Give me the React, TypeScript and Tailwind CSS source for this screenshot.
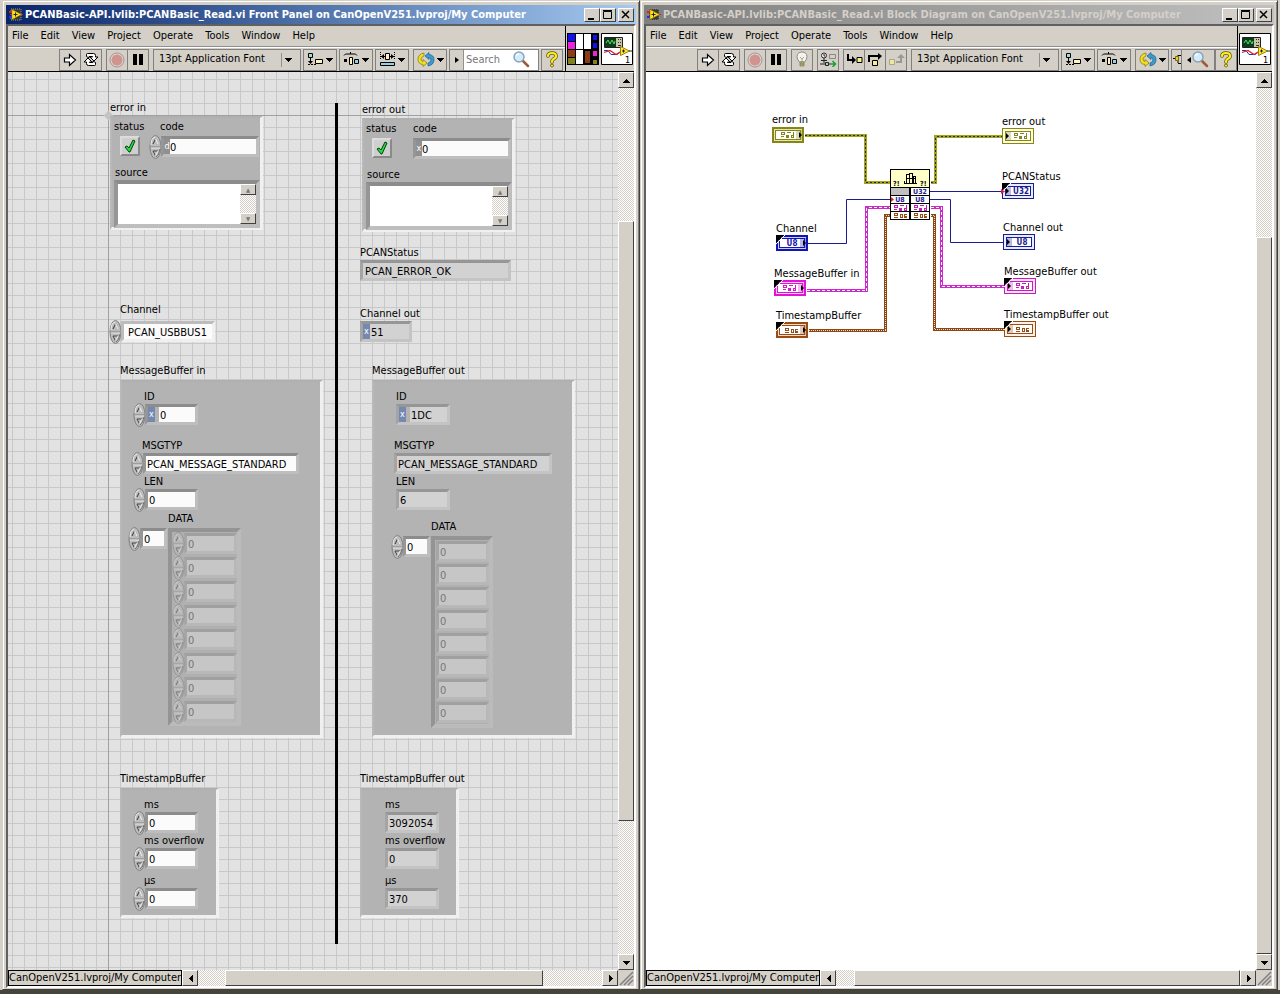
import React, { useId } from 'react';
import clsx from 'clsx';

const raised = 'bg-[#d4d0c8] border border-t-white border-l-white border-b-[#404040] border-r-[#404040]';
const dither = 'bg-[repeating-conic-gradient(#ffffff_0_25%,#d4d0c8_0_50%)] bg-[size:2px_2px]';
const tool = 'h-[22px] shrink-0 flex items-center justify-center border border-[#808080] bg-[#d4d0c8]';

/* ---------- icons ---------- */

const Arrow = ({ dir }: { dir: 'up' | 'down' | 'left' | 'right' }) => {
  const d = { up: 'M0 6h7L3.5 2z', down: 'M0 2h7L3.5 6z', left: 'M6 0v7L2 3.5z', right: 'M2 0v7l4-3.5z' }[dir];
  return (
    <svg width="7" height="7" viewBox="0 0 7 7" shapeRendering="crispEdges">
      <path d={d} />
    </svg>
  );
};

const LabviewIcon = () => (
  <svg width="14" height="13" viewBox="0 0 14 13" className="shrink-0">
    <rect x="2" y="1" width="10" height="11" fill="#3a3a30" stroke="#999" strokeDasharray="1 1" />
    <path d="M0 4h3" stroke="#e02020" strokeWidth="2" />
    <path d="M0 9h3" stroke="#2030e0" strokeWidth="2" />
    <path d="M3 1.500l9.500 5L3 11.500z" fill="#ffe21a" stroke="#8a7400" strokeWidth=".5" />
    <path d="M4.500 6.500h4M6.500 4.500v4" stroke="#222" />
    <path d="M12 6.500h2" stroke="#e02020" />
  </svg>
);

const RunIcon = () => (
  <svg width="14" height="14" viewBox="0 0 14 14">
    <path d="M1.500 5h5V1.500l6 5.500-6 5.500V9h-5z" fill="#fff" stroke="#000" strokeWidth="1.200" />
  </svg>
);

const LoopIcon = () => (
  <svg width="16" height="15" viewBox="0 0 16 15" fill="#fff" stroke="#000" strokeLinejoin="round">
    <path d="M3.500 4.500V2.500Q3.500 1.500 4.500 1.500h6Q12.500 1.500 12.500 3.500V5h2.500l-4 4-4-4h2.500V4.500H6V6z" />
    <path d="M12.500 10.500v2q0 1-1 1h-6Q3.500 13.500 3.500 11.500V10H1l4-4 4 4H6.500v.500H10V9z" />
  </svg>
);

const StopIcon = () => (
  <svg width="16" height="16" viewBox="0 0 16 16">
    <circle cx="8" cy="8" r="7" fill="#e4d4d0" stroke="#a09490" />
    <circle cx="8" cy="8" r="5.500" fill="#d09490" />
  </svg>
);

const PauseIcon = () => (
  <svg width="10" height="11" viewBox="0 0 10 11">
    <path d="M0 0h4v11H0zM6 0h4v11H6z" />
  </svg>
);

const BulbIcon = () => (
  <svg width="14" height="17" viewBox="0 0 14 17">
    <path d="M4.500 11Q2 8.500 2 5.500 2.500 1 7 1t5 4.500Q12 8.500 9.500 11z" fill="#f4f2ea" stroke="#8c8c84" />
    <path d="M5 6l2 2 2-2M7 8v3" fill="none" stroke="#a8a498" />
    <path d="M5 11h4v4H5z" fill="#c8c040" stroke="#777" strokeWidth=".8" />
    <path d="M5 13h4" stroke="#777" />
  </svg>
);

const RetainIcon = () => (
  <svg width="18" height="15" viewBox="0 0 18 15" fill="none" stroke="#222">
    <circle cx="5" cy="3.500" r="2.500" fill="#fff" />
    <path d="M5 2v2h1.500M5 6v5M2 8.500h6M1 12h5M9 12h3" />
    <path d="M10.500 2.500h6v4h-6z" stroke="#888" />
    <path d="M6.500 10.500h3v3h-3z" fill="#9fd4e8" />
    <path d="M12 12h4M13.500 9l3 3-3 3" stroke="#18a028" strokeWidth="1.500" />
  </svg>
);

const StepIntoIcon = () => (
  <svg width="17" height="13" viewBox="0 0 17 13" fill="none">
    <path d="M2 1v6h5" stroke="#000" strokeWidth="2" />
    <path d="M6 3l4 4-4 4z" fill="#000" />
    <path d="M11 4.500h5v5h-5z" fill="#f4f090" stroke="#000" />
  </svg>
);

const StepOverIcon = () => (
  <svg width="16" height="14" viewBox="0 0 16 14" fill="none">
    <path d="M2 9V3h10" stroke="#000" strokeWidth="2" />
    <path d="M11 0l4 3-4 4z" fill="#000" />
    <path d="M5.500 7.500h5v5h-5z" fill="#f4f090" stroke="#000" />
  </svg>
);

const StepOutIcon = () => (
  <svg width="17" height="13" viewBox="0 0 17 13" fill="none">
    <path d="M1.500 6.500h5v5h-5z" fill="#ece8a0" stroke="#aaa68c" />
    <path d="M8 9h5V4" stroke="#999" strokeWidth="2" />
    <path d="M9 5l4-4 4 4z" fill="#999" />
  </svg>
);

const AlignIcon = () => (
  <svg width="17" height="15" viewBox="0 0 17 15" fill="none" stroke="#000">
    <path d="M1.500 1.500h4v4h-4z" fill="#a0dcdc" />
    <path d="M3.500 6v4" />
    <path d="M1 12.500h8" strokeDasharray="2 1" />
    <path d="M1 9h5l-2.500 3z" fill="#000" stroke="none" />
    <path d="M8.500 7.500h7v4h-7z" fill="#fff4c0" />
  </svg>
);

const DistributeIcon = () => (
  <svg width="17" height="15" viewBox="0 0 17 15" fill="none" stroke="#000">
    <path d="M1 3.500L2.500 2h10L14 3.500M7.500 2V0" />
    <path d="M1 7h3v3H1z" fill="#000" stroke="none" />
    <path d="M6.500 5.500h3v7h-3z" fill="#fff4c0" />
    <path d="M11.500 7.500h4v4h-4z" fill="#8cd4ec" />
  </svg>
);

const ResizeIcon = () => (
  <svg width="17" height="15" viewBox="0 0 17 15" fill="none" stroke="#000">
    <path d="M1.500 0v8M15.500 0v8" strokeDasharray="1 1" />
    <path d="M2 4.500h4M11 4.500h4" />
    <path d="M2 4.500l3-2.500v5zM15 4.500L12 2v5z" fill="#000" stroke="none" />
    <path d="M6.500 1.500h4v6h-4z" fill="#fff4c0" />
    <path d="M1.500 10.500h14v3h-14z" fill="#8cd4ec" />
  </svg>
);

const ReorderIcon = () => (
  <svg width="18" height="15" viewBox="0 0 18 15" strokeWidth=".7">
    <path d="M7 1Q1 2 1 7.500 1 12 6 12.500V14.500L10 11 6 7.500v2Q4 9 4 7t3-3z" fill="#f0e020" stroke="#80720c" />
    <path d="M11 14q6-1 6-6.500Q17 3 12 2.500V.500L8 4l4 3.500v-2q2 .500 2 2.500t-3 3z" fill="#3c9cd0" stroke="#1c5c88" />
  </svg>
);

const SearchIcon = () => (
  <svg width="18" height="17" viewBox="0 0 18 17">
    <path d="M11 10l5 5" stroke="#9c5c38" strokeWidth="2.500" strokeLinecap="round" />
    <circle cx="7" cy="6" r="5" fill="#d4ecfa" stroke="#88a4bc" strokeWidth="1.500" />
    <path d="M4 5q1-2 3-2" fill="none" stroke="#fff" strokeWidth="1.300" />
  </svg>
);

const HelpIcon = () => (
  <svg width="14" height="17" viewBox="0 0 14 17" fill="none" strokeLinecap="round">
    <path d="M3 5q0-3 4-3t4 3q0 2-2.500 3Q7 9 7 11M7 14.500v.100" stroke="#5c5400" strokeWidth="3.600" />
    <path d="M3 5q0-3 4-3t4 3q0 2-2.500 3Q7 9 7 11M7 14.500v.100" stroke="#ffec20" strokeWidth="2.200" />
  </svg>
);

const ConnectorPane = () => (
  <svg width="32" height="32" viewBox="0 0 32 32" shapeRendering="crispEdges">
    <path fill="#000" d="M0 0h32v32H0z" />
    <path fill="#fff" d="M9 1h7v15H9zM17 1h7v15h-7zM9 17h7v14H9z" />
    <path fill="#1010f0" d="M1 1h7v7H1z" />
    <path fill="#f020e0" d="M1 9h7v7H1z" />
    <path fill="#8c3c10" d="M1 17h7v7H1zM18 18h5v12h-5z" />
    <path fill="#80801c" d="M1 25h7v6H1zM26 27h4v4h-4z" />
    <path fill="#1010f0" d="M26 2h4v5h-4zM26 10h4v5h-4z" />
    <path fill="#f020e0" d="M26 18h4v5h-4z" />
  </svg>
);

const ViIcon = () => (
  <svg width="32" height="32" viewBox="0 0 32 32">
    <path d="M.5.500h31v31H.5z" fill="#fff" stroke="#000" />
    <path d="M3.500 4.500h18v10h-18z" fill="#c8c4a8" stroke="#222" />
    <path d="M4 5h11v9H4z" fill="#0c3c1c" />
    <path d="M5 10l2-3 2 4 2-4 2 4 1-3" fill="none" stroke="#50e060" />
    <path d="M17 6.500h1M19 6.500h1M17 9.500h1M19 9.500h1M17 12.500h3" stroke="#333" />
    <path d="M3 17.500h4l3 4h6l4-3" fill="none" stroke="#2030c0" />
    <path d="M3 19.500l6-2 6 4 5-3" fill="none" stroke="#e02020" strokeWidth="1.300" />
    <path d="M19.500 13.500l9 4.500-9 4.500z" fill="#ffe83c" stroke="#a08000" />
    <path d="M21 18h3M22.500 16.500v3M28 18h3" stroke="#222" />
    <text x="24" y="30" fontSize="9">1</text>
  </svg>
);

/* ---------- window chrome ---------- */

const ToolButton = ({ label, className, children }: { label: string; className?: string; children: React.ReactNode }) => (
  <button aria-label={label} className={clsx(tool, className ?? 'w-[22px]')}>{children}</button>
);

const MenuButton = ({ label, className, children }: { label: string; className?: string; children: React.ReactNode }) => (
  <button aria-label={label} className={clsx(tool, 'w-[34px] gap-0.5', className)}>
    {children}
    <Arrow dir="down" />
  </button>
);

const FontSelect = () => (
  <div className={clsx(tool, 'relative w-[148px] ml-1 mr-[2px]')}>
    <select aria-label="Text settings" className="appearance-none w-full h-full pl-[5px] pr-5 pb-[2px] bg-transparent outline-none">
      <option>13pt Application Font</option>
    </select>
    <span className="absolute right-2 pointer-events-none"><Arrow dir="down" /></span>
    <span className="absolute right-4 h-3.5 w-px mr-[2px] bg-[#909090]" />
  </div>
);

const FrontTools = () => (
  <>
    <FontSelect />
    <MenuButton label="Align Objects"><AlignIcon /></MenuButton>
    <MenuButton label="Distribute Objects" className="ml-[2px]"><DistributeIcon /></MenuButton>
    <MenuButton label="Resize Objects" className="ml-[2px]"><ResizeIcon /></MenuButton>
    <MenuButton label="Reorder" className="ml-1"><ReorderIcon /></MenuButton>
    <div className={clsx(tool, 'w-[90px] ml-[2px]')}>
      <span className="w-[13px] flex justify-center">
        <svg width="4" height="6" viewBox="0 0 4 6"><path d="M0 0v6l4-3z" /></svg>
      </span>
      <label className="flex flex-1 h-full items-center bg-white border-l border-[#909090]">
        <input aria-label="Search" placeholder="Search" className="w-12 pl-[2px] outline-none placeholder:text-[#777777]" />
        <SearchIcon />
      </label>
    </div>
    <ToolButton label="Context Help" className="w-[22px] ml-[2px]"><HelpIcon /></ToolButton>
  </>
);

const DiagramTools = () => (
  <>
    <ToolButton label="Highlight Execution" className="w-[22px] ml-1"><BulbIcon /></ToolButton>
    <ToolButton label="Retain Wire Values" className="w-[22px] ml-1"><RetainIcon /></ToolButton>
    <ToolButton label="Step Into" className="w-[22px] ml-1"><StepIntoIcon /></ToolButton>
    <ToolButton label="Step Over" className="w-[22px] -ml-px"><StepOverIcon /></ToolButton>
    <ToolButton label="Step Out" className="w-[22px] -ml-px"><StepOutIcon /></ToolButton>
    <FontSelect />
    <MenuButton label="Align Objects"><AlignIcon /></MenuButton>
    <MenuButton label="Distribute Objects" className="ml-[2px]"><DistributeIcon /></MenuButton>
    <MenuButton label="Reorder" className="ml-1"><ReorderIcon /></MenuButton>
    <ToolButton label="Clean Up Diagram" className="w-[11px] ml-[2px]">
      <svg width="8" height="12" viewBox="0 0 8 12">
        <path d="M0 4.500h2M5 1v8M5 9.500h3M5 1.500h3" stroke="#000" fill="none" />
        <path d="M2.500 2.500h3v4h-3z" fill="#e8d020" stroke="#806c00" />
      </svg>
    </ToolButton>
    <ToolButton label="Search" className="w-[34px] -ml-px">
      <svg width="4" height="6" viewBox="0 0 4 6"><path d="M4 0v6L0 3z" /></svg>
      <SearchIcon />
    </ToolButton>
    <ToolButton label="Context Help"><HelpIcon /></ToolButton>
  </>
);

const ScrollButton = ({ dir }: { dir: 'up' | 'down' | 'left' | 'right' }) => (
  <button aria-label={`Scroll ${dir}`} className={clsx('size-4 shrink-0 flex items-center justify-center', raised)}>
    <Arrow dir={dir} />
  </button>
);

interface WindowProps {
  title: string;
  active?: boolean;
  tools: React.ReactNode;
  icons: React.ReactNode;
  vScroll: React.ReactNode;
  hScroll: React.ReactNode;
  children: React.ReactNode;
}

const Window = ({ title, active, tools, icons, vScroll, hScroll, children }: WindowProps) => (
  <section className="flex-1 min-w-0 flex flex-col bg-[#d4d0c8] border border-t-[#d4d0c8] border-l-[#d4d0c8] border-r-[#404040] border-b-[#404040] px-[3px] pb-px pt-1 shadow-[inset_1px_1px_0_#ffffff,inset_-1px_0_0_#808080]">
    <header
      className={clsx(
        'h-[19px] shrink-0 flex items-center pr-[2px] bg-linear-to-r font-bold',
        active ? 'from-[#0a246a] to-[#a6caf0] text-white' : 'from-[#808080] to-[#c0c0c0] text-[#d4d0c8]'
      )}
    >
      <span className="pl-[3px] pr-[2px]"><LabviewIcon /></span>
      <h1 className="flex-1 truncate">{title}</h1>
      <button aria-label="Minimize" className={clsx('w-4 h-3.5', raised)}>
        <svg width="14" height="12" viewBox="0 0 14 12"><path d="M3 9h6v2H3z" /></svg>
      </button>
      <button aria-label="Maximize" className={clsx('w-4 h-3.5', raised)}>
        <svg width="14" height="12" viewBox="0 0 14 12"><path d="M2.500 2.500h8v7h-8zM2 1.500h9" fill="none" stroke="#000" /></svg>
      </button>
      <button aria-label="Close" className={clsx('w-4 h-3.5 ml-[2px]', raised)}>
        <svg width="14" height="12" viewBox="0 0 14 12"><path d="M3 2l7 7M10 2L3 9" stroke="#000" strokeWidth="1.500" /></svg>
      </button>
    </header>

    <div className="flex-1 min-h-0 flex flex-col border-2 border-t-[#606060] border-l-[#606060] border-r-white border-b-white">
      <div className="h-[46px] shrink-0 flex border-b border-black">
        <div className="flex-1 min-w-0 flex flex-col overflow-hidden">
          <nav className="h-[21px] flex items-center gap-3 pl-1 border-b border-[#909090]">
            {['File', 'Edit', 'View', 'Project', 'Operate', 'Tools', 'Window', 'Help'].map(item => (
              <button key={item}>{item}</button>
            ))}
          </nav>
          <div className="flex-1 flex items-center pl-[51px] border-t border-white">
            <ToolButton label="Run"><RunIcon /></ToolButton>
            <ToolButton label="Run Continuously" className="w-[22px] -ml-px"><LoopIcon /></ToolButton>
            <ToolButton label="Abort Execution" className="w-[22px] ml-1"><StopIcon /></ToolButton>
            <ToolButton label="Pause" className="w-[22px] -ml-px"><PauseIcon /></ToolButton>
            {tools}
          </div>
        </div>
        <div className="shrink-0 flex items-center gap-[2px] px-px border-l border-black">{icons}</div>
      </div>

      <div className="flex-1 min-h-0 flex">
        {children}
        <div className={clsx('w-4 shrink-0 flex flex-col', dither)}>
          <ScrollButton dir="up" />
          <div className="flex-1 flex flex-col">{vScroll}</div>
          <ScrollButton dir="down" />
        </div>
      </div>

      <footer className="h-4 shrink-0 flex">
        <div className="shrink-0 border border-black leading-[14px] whitespace-nowrap">
          CanOpenV251.lvproj/My Computer
        </div>
        <ScrollButton dir="left" />
        <div className={clsx('flex-1 flex', dither)}>{hScroll}</div>
        <ScrollButton dir="right" />
        <svg width="16" height="16" viewBox="0 0 16 16" className="shrink-0" stroke="#808080" strokeWidth="1.500">
          <path d="M2 15L15 2M6 15l9-9M10 15l5-5" />
        </svg>
      </footer>
    </div>
  </section>
);

/* ---------- front panel controls ---------- */

const Spinner = ({ dim, className }: { dim?: boolean; className?: string }) => (
  <button aria-label="Increment or decrement" className={clsx('w-[13px] shrink-0', dim && 'opacity-50', className)}>
    <svg width="13" height="24" viewBox="0 0 13 24" fill="none">
      <ellipse cx="6.500" cy="12" rx="5.500" ry="11.500" fill="#bcbcbc" stroke="#808080" />
      <path d="M2 10Q2 3 6 2" stroke="#f0f0f0" />
      <path d="M11 14q-1 6-4 8" stroke="#707070" />
      <path d="M2 12h9" stroke="#808080" />
      <path d="M2 13h9" stroke="#e8e8e8" />
      <path d="M4 9l2.500-5" stroke="#333" />
      <path d="M6.500 4L9 9" stroke="#eee" />
      <path d="M4 16h5M4 16l2.500 5" stroke="#444" />
      <path d="M9 16l-2.500 5" stroke="#eee" />
    </svg>
  </button>
);

const Radix = ({ kind }: { kind: 'x' | 'd' | 'hex' }) => (
  <span
    className={clsx(
      'shrink-0 h-full flex items-center justify-center text-[9px] leading-none text-white',
      kind === 'hex' ? 'w-[7px] bg-[#7488b0]' : 'w-1.5 bg-[#909090]'
    )}
  >
    {kind === 'd' ? 'd' : 'x'}
  </span>
);

interface FieldProps {
  label?: string;
  name?: string;
  value: string;
  width: string;
  spin?: boolean;
  readOnly?: boolean;
  white?: boolean;
  dim?: boolean;
  radix?: 'x' | 'd' | 'hex';
  radixGap?: boolean;
  light?: boolean;
  labelClass?: string;
  textClass?: string;
}

const Field = ({ label, name, value, width, spin, readOnly, white, dim, radix, radixGap, light, labelClass, textClass }: FieldProps) => {
  const id = useId();
  return (
    <div className="flex flex-col">
      {label && <label htmlFor={id} className={clsx('whitespace-nowrap pt-px', labelClass)}>{label}</label>}
      <div className="flex items-center h-[21px]">
        {spin && <Spinner dim={dim} className="-mr-px" />}
        <div
          className={clsx(
            'flex h-full border-[3px]',
            width,
            light ? 'border-t-[#bcbcbc] border-l-[#bcbcbc] border-r-[#f0f0f0] border-b-[#f0f0f0]'
              : dim ? 'border-t-[#a0a0a0] border-l-[#a6a6a6] border-r-[#b8b8b8] border-b-[#b8b8b8]'
              : readOnly && !white ? 'border-t-[#969696] border-l-[#a4a4a4] border-r-[#c4c4c4] border-b-[#c4c4c4]'
              : 'border-t-[#8c8c8c] border-l-[#969696] border-r-[#bebebe] border-b-[#bebebe]',
            dim ? 'bg-[#c6c6c6] text-[#777777]' : readOnly && !white ? 'bg-[#d2d2d2]' : 'bg-[#fbfbfb]'
          )}
        >
          {radix && <Radix kind={radix} />}
          {radixGap && <span className="w-1 shrink-0 bg-[#b3b3b3]" />}
          <input
            id={id}
            aria-label={label ? undefined : name}
            defaultValue={value}
            readOnly={readOnly}
            className={clsx('min-w-0 flex-1 h-full pt-px outline-none', textClass ?? 'pl-px')}
          />
        </div>
      </div>
    </div>
  );
};

const cluster = 'bg-[#b3b3b3] border-t-2 border-l-2 border-r-[3px] border-b-[3px] border-t-[#b0b0b0] border-l-[#b8b8b8] border-r-[#f0f0f0] border-b-[#f0f0f0]';

const ErrorCluster = ({ title, out }: { title: string; out?: boolean }) => {
  const id = useId();
  return (
    <fieldset>
      <legend className="mb-px">{title}</legend>
      <div className={clsx('w-[153px] h-[114px] pt-px', cluster)}>
        <div className="flex h-[39px]">
          <label className="pl-[2px] pt-px w-[35px]">
            status
            <input type="checkbox" defaultChecked className="sr-only" />
            <span className="mt-[2px] ml-1.5 size-5 flex items-center justify-center bg-[#cfcfcf] border-2 border-t-[#dcdcdc] border-l-[#dcdcdc] border-r-[#8a8a8a] border-b-[#8a8a8a]">
              <svg width="12" height="14" viewBox="0 0 12 14">
                <path d="M1 8l2-1 2 2 4-8 2 1-5 11H5z" fill="#20e040" stroke="#0a3c10" />
              </svg>
            </span>
          </label>
          <div className={out ? 'pl-[14px]' : 'pl-[2px]'}>
            <Field label="code" value="0" width="w-[98px]" spin={!out} radix={out ? 'x' : 'd'} readOnly={out} white textClass="" labelClass={out ? 'mb-[2px]' : 'pl-[11px] mb-[2px]'} />
          </div>
        </div>
        <div className="pl-[2px] pt-2">
          <label htmlFor={id} className="block pl-px">source</label>
          <div className="flex w-[146px] h-12 border-4 bg-white border-t-[#8c8c8c] border-l-[#969696] border-r-[#bebebe] border-b-[#bebebe]">
            <textarea id={id} readOnly={out} className="flex-1 min-w-0 resize-none outline-none" />
            <div className={clsx('w-4 flex flex-col justify-between', dither)}>
              <button aria-label="Scroll up" className={clsx('h-[11px] flex items-center justify-center text-[6px] leading-none text-[#777777]', raised)}>▲</button>
              <button aria-label="Scroll down" className={clsx('h-[11px] flex items-center justify-center text-[6px] leading-none text-[#777777]', raised)}>▼</button>
            </div>
          </div>
        </div>
      </div>
    </fieldset>
  );
};

const bytes = ['0', '0', '0', '0', '0', '0', '0', '0'];

const MessageCluster = ({ out }: { out?: boolean }) => {
  const pad = out ? '' : 'pl-[11px]';
  return (
    <fieldset>
      <legend className="mb-[2px]">{out ? 'MessageBuffer out' : 'MessageBuffer in'}</legend>
      <div className={clsx('w-[203px] h-[358px] pt-[7px]', cluster)}>
        <div className={out ? 'pl-[22px]' : 'pl-[11px]'}>
          <Field label="ID" value={out ? '1DC' : '0'} width={out ? 'w-[54px]' : 'w-[53px]'} spin={!out} radix="hex" radixGap readOnly={out} labelClass={pad} />
        </div>
        <div className={clsx('mt-[13px]', out ? 'pl-5' : 'pl-[9px]')}>
          <Field label="MSGTYP" value="PCAN_MESSAGE_STANDARD" width={out ? 'w-[158px]' : 'w-[156px]'} spin={!out} readOnly={out} labelClass={pad} />
        </div>
        <div className={out ? 'pl-[22px]' : 'pl-[11px]'}>
          <Field label="LEN" value={out ? '6' : '0'} width={out ? 'w-[54px]' : 'w-[53px]'} spin={!out} readOnly={out} labelClass={pad} />
        </div>
        <div className={out ? 'mt-[10px] pl-[57px]' : 'mt-[2px] pl-[46px]'}>DATA</div>
        <div className={clsx('flex items-start mt-[2px]', out ? 'pl-[17px]' : 'pl-1.5')}>
          <Field name="DATA index" value="0" width="w-[27px]" spin />
          <div
            className={clsx(
              'flex flex-col border-4 bg-[#b0b0b0] pt-px ml-px border-t-[#949494] border-l-[#949494] border-r-[#bbbbbb] border-b-[#bbbbbb]',
              out ? 'w-[62px] gap-[2px] pb-px pl-px' : 'w-[73px] gap-[3px]'
            )}
          >
            {bytes.map((b, i) => (
              <Field key={i} name={`DATA ${i}`} value={b} width="w-[53px]" spin={!out} dim readOnly={out} />
            ))}
          </div>
        </div>
      </div>
    </fieldset>
  );
};

const TimestampCluster = ({ out }: { out?: boolean }) => {
  const pad = out ? '' : 'pl-[11px]';
  const width = out ? 'w-[54px]' : 'w-[53px]';
  return (
    <fieldset>
      <legend className="mb-[2px]">{out ? 'TimestampBuffer out' : 'TimestampBuffer'}</legend>
      <div className={clsx('w-[99px] h-[130px] pt-[7px]', cluster, out ? 'pl-[23px]' : 'pl-[11px]')}>
        <Field label="ms" value={out ? '3092054' : '0'} width={width} spin={!out} readOnly={out} labelClass={pad} />
        <Field label="ms overflow" value="0" width={width} spin={!out} readOnly={out} labelClass={pad} />
        <div className="mt-1">
          <Field label="µs" value={out ? '370' : '0'} width={width} spin={!out} readOnly={out} labelClass={pad} />
        </div>
      </div>
    </fieldset>
  );
};

const FrontPanel = () => (
  <main className="relative flex-1 overflow-hidden leading-[14px] bg-[#e2e2e2] bg-[linear-gradient(to_right,#c8c8c8_1px,transparent_1px),linear-gradient(to_bottom,#c8c8c8_1px,transparent_1px)] bg-[size:12px_12px] bg-[position:4px_7px]">
    <div className="absolute left-[100px] inset-y-0 w-px bg-[#a0a0a0]" />
    <div className="absolute top-[43px] inset-x-0 h-px bg-[#a0a0a0]" />
    <div className="absolute left-[97px] top-10 size-[7px] rotate-45 bg-[#c4c4c4]" />
    <div className="absolute left-[327px] top-[31px] w-[3px] h-[841px] bg-black" />

    <div className="absolute left-[102px] top-[29px]"><ErrorCluster title="error in" /></div>
    <div className="absolute left-[354px] top-[31px]"><ErrorCluster title="error out" out /></div>
    <div className="absolute left-[352px] top-[173px]">
      <Field label="PCANStatus" value="PCAN_ERROR_OK" width="w-[151px]" readOnly textClass="pl-[2px]" />
    </div>
    <div className="absolute left-[352px] top-[234px]">
      <Field label="Channel out" value="51" width="w-[52px]" radix="hex" readOnly />
    </div>
    <div className="absolute left-[101px] top-[230px]">
      <Field label="Channel" value="PCAN_USBBUS1" width="w-[94px]" spin light labelClass="pl-[11px] mb-1" textClass="pl-1" />
    </div>
    <div className="absolute left-[112px] top-[292px]"><MessageCluster /></div>
    <div className="absolute left-[364px] top-[292px]"><MessageCluster out /></div>
    <div className="absolute left-[112px] top-[700px]"><TimestampCluster /></div>
    <div className="absolute left-[352px] top-[700px]"><TimestampCluster out /></div>
  </main>
);

/* ---------- block diagram ---------- */

const labels = [
  { text: 'error in', pos: 'left-[126px] top-[41px]' },
  { text: 'error out', pos: 'left-[356px] top-[43px]' },
  { text: 'PCANStatus', pos: 'left-[356px] top-[98px]' },
  { text: 'Channel', pos: 'left-[130px] top-[150px]' },
  { text: 'Channel out', pos: 'left-[357px] top-[149px]' },
  { text: 'MessageBuffer in', pos: 'left-[128px] top-[195px]' },
  { text: 'MessageBuffer out', pos: 'left-[358px] top-[193px]' },
  { text: 'TimestampBuffer', pos: 'left-[130px] top-[237px]' },
  { text: 'TimestampBuffer out', pos: 'left-[358px] top-[236px]' },
];

// mixed cluster glyph
const Mixed = ({ x, y, color }: { x: number; y: number; color: string }) => (
  <g transform={`translate(${x} ${y})`} fill={color} shapeRendering="crispEdges">
    <path d="M1 1h4v1H1zM1 3h4v1H1zM1 1h1v3H1zM4 1h1v3H4zM7 1h4v1H7zM13 1h1v3h-1z" />
    <path d="M1 5h3v1H1zM6 4h3v3H6zM11 4h3v1h-3zM11 6h3v1h-3zM11 4h1v3h-1zM13 4h1v3h-1z" />
  </g>
);

// numeric cluster glyph
const Digits = ({ x, y, color }: { x: number; y: number; color: string }) => (
  <g transform={`translate(${x} ${y})`} fill="none" stroke={color} shapeRendering="crispEdges">
    <path d="M1.500 1.500h3v2h-3zM1 5.500h4M7.500 2.500h2v3h-2zM11 2.500h3M11.500 2v4M11.500 4.500h2v1h-2z" />
  </g>
);

const Glyph = ({ kind, x, y, color }: { kind: string; x: number; y: number; color: string }) => {
  if (kind === 'mixed') return <Mixed x={x} y={y} color={color} />;
  if (kind === 'digits') return <Digits x={x} y={y + 1} color={color} />;
  return <text x={x + 8} y={y + 7} textAnchor="middle" fontSize="8" fontWeight="bold" fill={color}>{kind}</text>;
};

interface TerminalProps {
  x: number;
  y: number;
  kind: string;
  color: string;
  fill: string;
  out?: boolean;
  corner?: boolean;
}

const Terminal = ({ x, y, kind, color, fill, out, corner }: TerminalProps) => (
  <g transform={`translate(${x} ${y})`}>
    <rect x={out ? 0.5 : 1} y={out ? 0.5 : 1} width={out ? 31 : 30} height={out ? 15 : 14} fill={fill} stroke={color} strokeWidth={out ? 1 : 2} />
    <rect x="3.500" y="3.500" width="25" height="9" fill="#fff" stroke={color} />
    <rect x={out ? 3 : 24} y="3" width="6" height="10" fill={color} opacity=".3" />
    <path d={out ? 'M4 5v6l3-3z' : 'M27 5v6l3-3z'} fill="#000" />
    <Glyph kind={kind} x={out ? 11 : 8} y={4} color={color} />
    {corner && <path d="M0 0h8L0 8z" fill="#000" />}
    {corner && <path d="M9 0L0 9" stroke="#fff" />}
  </g>
);

const wires = [
  { d: 'M158 63h61v47h25', kind: 'error' },
  { d: 'M284 110h5V64h67', kind: 'error' },
  { d: 'M160 218h60v-83h24', kind: 'message' },
  { d: 'M284 135h11v79h63', kind: 'message' },
  { d: 'M162 258h77V143h5', kind: 'time' },
  { d: 'M284 143h4v114h70', kind: 'time' },
];

const Wire = ({ d, kind }: { d: string; kind: string }) => {
  const c = {
    error: { base: '#a4a418', core: '#26264c' },
    message: { base: '#cc28cc', core: '#ffffff' },
    time: { base: '#8c4814', core: '#f4dcc8' },
  }[kind]!;
  return (
    <g fill="none" transform="translate(.5 .5)" shapeRendering="crispEdges">
      <path d={d} stroke={c.base} strokeWidth="3" />
      <path d={d} stroke={c.core} strokeWidth="1" strokeDasharray={kind === 'time' ? '1 1' : kind === 'error' ? '2 2' : '3 2'} />
    </g>
  );
};

const BlockDiagram = () => (
  <main className="relative flex-1 overflow-hidden bg-white leading-[14px]">
    <svg width="480" height="290" viewBox="0 0 480 290" className="absolute left-0 top-0" fontFamily="DejaVu Sans Condensed, DejaVu Sans, sans-serif">
      {wires.map(w => <Wire key={w.d} {...w} />)}
      <g fill="none" stroke="#1c1c90">
        <path d="M284 119.500h72M162 171.500h38.500v-44H244M284 127.500h20.500v43H357" />
      </g>

      <Terminal x={126} y={55} kind="mixed" color="#85851c" fill="#e8e8a0" />
      <Terminal x={130} y={163} kind="U8" color="#1414b4" fill="#c4d0ff" corner />
      <Terminal x={128} y={208} kind="mixed" color="#e014d4" fill="#ffd0ff" corner />
      <Terminal x={130} y={250} kind="digits" color="#984c14" fill="#f4dcc8" corner />
      <Terminal x={356} y={56} kind="mixed" color="#85851c" fill="#ffffd8" out />
      <Terminal x={356} y={111} kind="U32" color="#1c1c90" fill="#e4ecff" out corner />
      <Terminal x={357} y={162} kind="U8" color="#1c1c90" fill="#e4ecff" out />
      <Terminal x={358} y={206} kind="mixed" color="#c81cbc" fill="#ffe4ff" out corner />
      <Terminal x={358} y={249} kind="digits" color="#984c14" fill="#fff0e4" out corner />
      <path d="M355 117l4 2.500-4 2.500z" fill="#e01c3c" />

      <g shapeRendering="crispEdges" stroke="#000">
        <path d="M244.500 97.500h39v50h-39z" fill="#fff" />
        <path d="M244.500 97.500h39v18h-39z" fill="#ffffc8" />
        <path d="M245 116h19v7h-19z" fill="#c0c0c0" stroke="none" />
        <path d="M244 123.500h40M244 131.500h40M244 139.500h40" />
        <path d="M264 115v33" strokeWidth="2" />
        <path d="M260.500 102.500h3v9h-3zM263.500 101.500h3v10h-3zM267.500 104.500h2v7h-2zM258 111.500h13M258.500 109v3M260 106.500h9" fill="none" />
      </g>
      <text x="247" y="114" fontSize="7" fontWeight="bold">?!</text>
      <text x="274" y="114" fontSize="7" fontWeight="bold">?!</text>
      <g fontSize="7" fontWeight="bold" fill="#1c1c90" textAnchor="middle">
        <text x="274" y="122">U32</text>
        <text x="254" y="130">U8</text>
        <text x="274" y="130">U8</text>
      </g>
      <path d="M245 125l3 2.500-3 2.500z" fill="#e01c3c" />
      <Mixed x={247} y={132} color="#c81cbc" />
      <Mixed x={267} y={132} color="#c81cbc" />
      <Digits x={247} y={140} color="#984c14" />
      <Digits x={267} y={140} color="#984c14" />
    </svg>
    {labels.map(l => (
      <span key={l.text} className={clsx('absolute whitespace-nowrap', l.pos)}>{l.text}</span>
    ))}
  </main>
);

export default function App() {
  return (
    <div className="h-screen flex px-[2px] bg-[#d4d0c8] border-b-4 border-[#45453a] text-[11px] leading-[14px] text-black font-['DejaVu_Sans_Condensed','DejaVu_Sans',sans-serif]">
      <Window
        title="PCANBasic-API.lvlib:PCANBasic_Read.vi Front Panel on CanOpenV251.lvproj/My Computer"
        active
        tools={<FrontTools />}
        icons={<><ConnectorPane /><ViIcon /></>}
        vScroll={<><div className="grow-[133]" /><div className={clsx('grow-[600]', raised)} /><div className="grow-[133]" /></>}
        hScroll={<><div className="grow-[27]" /><div className={clsx('grow-[318]', raised)} /><div className="grow-[59]" /></>}
      >
        <FrontPanel />
      </Window>
      <Window
        title="PCANBasic-API.lvlib:PCANBasic_Read.vi Block Diagram on CanOpenV251.lvproj/My Computer"
        tools={<DiagramTools />}
        icons={<ViIcon />}
        vScroll={<><div className="grow-[149]" /><div className={clsx('grow-[717]', raised)} /></>}
        hScroll={<><div className="grow-[18]" /><div className={clsx('grow-[386]', raised)} /></>}
      >
        <BlockDiagram />
      </Window>
    </div>
  );
}
